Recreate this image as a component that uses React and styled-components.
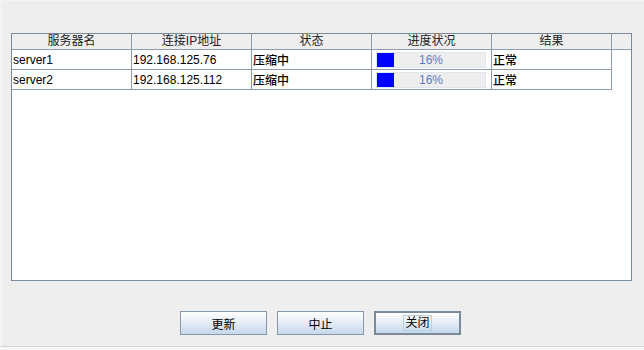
import React from "react";
import styled, { createGlobalStyle } from "styled-components";

const GlobalStyle = createGlobalStyle`
  html, body {
    margin: 0;
    padding: 0;
    background: #f6f6f6;
  }
  body {
    font-family: "Liberation Sans", "Noto Sans CJK SC", sans-serif;
    font-size: 12px;
  }
`;

const columns = ["服务器名", "连接IP地址", "状态", "进度状况", "结果"];

const rows = [
  { name: "server1", ip: "192.168.125.76", status: "压缩中", progress: 16, result: "正常" },
  { name: "server2", ip: "192.168.125.112", status: "压缩中", progress: 16, result: "正常" },
];

function App() {
  return (
    <>
      <GlobalStyle />
      <Frame>
        <ScrollPane>
          <HeaderRow>
            {columns.map((c) => (
              <HeaderCell key={c}>{c}</HeaderCell>
            ))}
            <Corner />
          </HeaderRow>
          {rows.map((r) => (
            <Row key={r.name}>
              <Cell>{r.name}</Cell>
              <Cell>{r.ip}</Cell>
              <Cell strong>{r.status}</Cell>
              <Cell>
                <Progress>
                  <Fill style={{ width: `${r.progress}%` }} />
                  <Percent>{r.progress}%</Percent>
                </Progress>
              </Cell>
              <Cell strong>{r.result}</Cell>
            </Row>
          ))}
        </ScrollPane>
        <ButtonBar>
          <Button>更新</Button>
          <Button>中止</Button>
          <Button focused>
            <FocusText>关闭</FocusText>
          </Button>
        </ButtonBar>
      </Frame>
    </>
  );
}

export default App;

const Frame = styled.div`
  width: 644px;
  height: 347px;
  box-sizing: border-box;
  background: #eeeeee;
  border-top: 1px solid #f4f4f4;
  border-left: 2px solid #f4f4f4;
  border-bottom: 1px solid #d8d4cc;
  padding: 32px 11px 0 9px;
  display: flex;
  flex-direction: column;
`;

const ScrollPane = styled.div`
  width: 621px;
  height: 248px;
  flex-shrink: 0;
  box-sizing: border-box;
  border: 1px solid #7a8a99;
  background: #ffffff;
`;

const HeaderRow = styled.div`
  display: flex;
  height: 15px;
  background: #eeeeee;
  border-bottom: 1px solid #8c9bad;
`;

const HeaderCell = styled.div`
  width: 120px;
  box-sizing: border-box;
  border-right: 1px solid #8c9bad;
  text-align: center;
  line-height: 15px;
  font-size: 12px;
  color: #222;
`;

const Corner = styled.div`
  flex: 1;
`;

const Row = styled.div`
  display: flex;
  height: 19px;
  width: 600px;
  border-bottom: 1px solid #8c9bad;
`;

const Cell = styled.div`
  width: 120px;
  box-sizing: border-box;
  border-right: 1px solid #8c9bad;
  padding-left: 1px;
  font-size: 12px;
  color: #000;
  font-weight: ${(p) => (p.strong ? 500 : 400)};
  white-space: nowrap;
  overflow: hidden;
  display: flex;
  align-items: center;
`;

const Progress = styled.div`
  position: relative;
  width: 110px;
  height: 16px;
  margin-left: 3px;
  box-sizing: border-box;
  border: 1px solid #dfe6ee;
  background: #eeeeee;
`;

const Fill = styled.div`
  height: 100%;
  background: #0000ff;
`;

const Percent = styled.span`
  position: absolute;
  inset: 0;
  text-align: center;
  line-height: 14px;
  font-size: 12px;
  color: #5b7cc4;
`;

const ButtonBar = styled.div`
  display: flex;
  justify-content: center;
  gap: 10px;
  margin-top: 30px;
  padding-right: 3px;
`;

const Button = styled.button`
  width: 87px;
  height: 24px;
  box-sizing: border-box;
  border: ${(p) => (p.focused ? "2px solid #7a8a99" : "1px solid #8597a8")};
  background: linear-gradient(#ffffff, #dde8f3 60%, #c6d8ea);
  font-family: "Liberation Sans", "Noto Sans CJK SC", sans-serif;
  font-size: 12px;
  color: #000;
  padding: 0;
  display: flex;
  align-items: center;
  justify-content: center;
`;

const FocusText = styled.span`
  border: 1px solid #b8cfe5;
  padding: 0 1px;
  line-height: 14px;
`;
